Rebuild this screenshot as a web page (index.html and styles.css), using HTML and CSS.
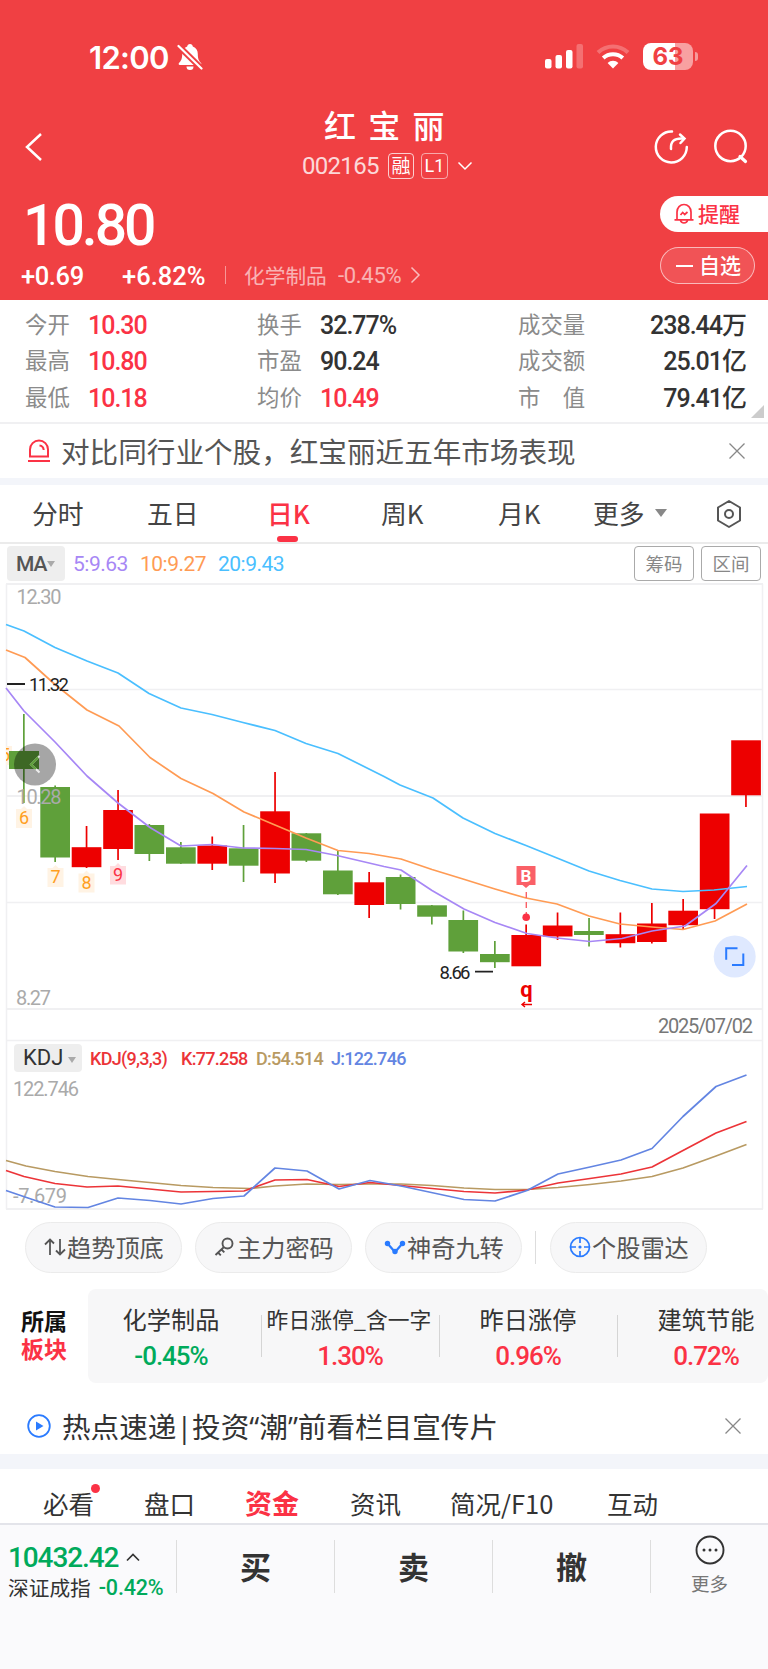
FILE: index.html
```
<!DOCTYPE html>
<html lang="zh-CN">
	<head>
		<meta charset="UTF-8">
		<title>红宝丽 002165</title>
		<link rel="stylesheet" href="styles.css">
	</head>
	<body>
		<div class="header">
			<div class="status">
				<span class="time">12:00</span>
				<svg class="mute" width="26" height="28" viewBox="0 0 26 28">
					<path d="M13 1c-1.700 0-2.600 1-2.800 2.400C6.700 4.600 5.200 7.500 5.200 11c0 5-1.200 7-3.200 9-.8.900-.3 2 .8 2h20.400c1.100 0 1.600-1.100.8-2-2-2-3.200-4-3.200-9 0-3.500-1.500-6.400-5-7.600C15.600 2 14.700 1 13 1z" fill="#fff"/>
					<path d="M9.500 23.500h7a3.500 3.500 0 0 1-7 0z" fill="#fff"/>
					<path d="M1 2.500l24 23.500" stroke="#f04043" stroke-width="6"/>
					<path d="M1.500 3l23 22.500" stroke="#fff" stroke-width="2.200" stroke-linecap="round"/>
				</svg>
				<svg class="signal" width="39" height="26" viewBox="0 0 39 26" fill="#fff">
					<rect x="0" y="15" width="6.500" height="9.500" rx="2"/>
					<rect x="10.500" y="11" width="6.500" height="13.500" rx="2"/>
					<rect x="21" y="6" width="6.500" height="18.500" rx="2"/>
					<rect x="31.500" y="0" width="6.500" height="24.500" rx="2" opacity=".25"/>
				</svg>
				<svg class="wifi" width="34" height="26" viewBox="0 0 34 26">
					<path d="M2 8.500a21.500 21.500 0 0 1 30 0" fill="none" stroke="#fff" stroke-width="4" opacity=".25"/>
					<path d="M7.200 14a14.500 14.500 0 0 1 19.600 0" fill="none" stroke="#fff" stroke-width="4"/>
					<path d="M17 24.500l-5.400-5.500a7.800 7.800 0 0 1 10.800 0z" fill="#fff"/>
				</svg>
				<div class="battery">63</div>
				<i class="battery-cap"></i>
			</div>
			<div class="titlebar">
				<svg class="back" width="18" height="30" viewBox="0 0 18 30"><path d="M16 2L2 15l14 13" fill="none" stroke="#fff" stroke-width="2.500"/></svg>
				<div class="title">
					<h1>红 宝 丽</h1>
					<div class="code">
						<span class="num">002165</span>
						<span class="tag">融</span>
						<span class="tag tag-l">L1</span>
						<svg width="16" height="10" viewBox="0 0 16 10"><path d="M1.500 1.500L8 8l6.500-6.500" fill="none" stroke="#fff" stroke-width="1.500"/></svg>
					</div>
				</div>
				<svg class="share" width="36" height="36" viewBox="0 0 36 36" fill="none" stroke="#fff" stroke-width="2.500" stroke-linecap="round">
					<path d="M18 2.500A15.500 15.500 0 1 0 32.800 18"/>
					<path d="M17 20c-.5-7 2.500-11 12-10.500"/>
					<path d="M26 5.500l4.500 4-4 4.500"/>
				</svg>
				<svg class="search" width="36" height="36" viewBox="0 0 36 36" fill="none" stroke="#fff" stroke-width="2.500">
					<circle cx="17.500" cy="18" r="15.200"/>
					<path d="M27 28.500l5.500 5" stroke-width="3.200" stroke-linecap="round"/>
				</svg>
			</div>
			<div class="quote">
				<div class="quote-main">
					<div class="price num">10.80</div>
					<div class="change">
						<span class="num chg">+0.69</span>
						<span class="num pct">+6.82%</span>
						<i class="sep"></i>
						<span class="sector-name">化学制品</span>
						<span class="num sector-pct">-0.45%</span>
						<svg width="11" height="18" viewBox="0 0 11 18"><path d="M1.500 1.500L9 9l-7.500 7.500" fill="none" stroke="#fff" stroke-opacity=".65" stroke-width="1.500"/></svg>
					</div>
				</div>
				<div class="quote-btns">
					<div class="btn-remind">
						<svg width="20" height="22" viewBox="0 0 20 22" fill="none" stroke="#fb3245" stroke-width="1.700">
							<path d="M3 16.500V9a7 7.500 0 0 1 14 0v7.500M.5 16.800h19"/>
							<path d="M6.500 17a3.500 3 0 0 0 7 0"/>
							<path d="M6.500 12l2.200-2.500 2 2L13.500 9"/>
						</svg>
						<span>提醒</span>
					</div>
					<div class="btn-self"><i></i><span>自选</span></div>
				</div>
			</div>
		</div>

		<div class="stats">
			<div class="col1">
				<p><label>今开</label><b class="num red">10.30</b></p>
				<p><label>最高</label><b class="num red">10.80</b></p>
				<p><label>最低</label><b class="num red">10.18</b></p>
			</div>
			<div class="col2">
				<p><label>换手</label><b class="num">32.77%</b></p>
				<p><label>市盈</label><b class="num">90.24</b></p>
				<p><label>均价</label><b class="num red">10.49</b></p>
			</div>
			<div class="col3">
				<p><label>成交量</label><b class="num">238.44万</b></p>
				<p><label>成交额</label><b class="num">25.01亿</b></p>
				<p><label>市　值</label><b class="num">79.41亿</b></p>
			</div>
			<i class="corner"></i>
		</div>

		<div class="notice">
			<svg width="22" height="24" viewBox="0 0 22 24" fill="none" stroke="#fb3245" stroke-width="2">
				<path d="M2 17.500V10.500a9 9 0 0 1 18 0v7z"/>
				<path d="M0 22h22M11.500 6.500c2.500.3 4 1.800 4.200 4.500"/>
			</svg>
			<span>对比同行业个股，红宝丽近五年市场表现</span>
			<svg class="close" width="16" height="16" viewBox="0 0 16 16"><path d="M.5.500l15 15M15.500.500l-15 15" stroke="#888" stroke-width="1.300"/></svg>
		</div>

		<div class="period">
			<span>分时</span>
			<span>五日</span>
			<span class="on">日K</span>
			<span>周K</span>
			<span>月K</span>
			<span class="more">更多<i class="tri"></i></span>
			<svg width="28" height="30" viewBox="0 0 28 30" fill="none" stroke="#555" stroke-width="2">
				<path d="M14 2l11 6.500v13L14 28 3 21.500v-13z" stroke-linejoin="round"/>
				<circle cx="14" cy="15" r="4"/>
			</svg>
		</div>

		<div class="ma">
			<span class="ma-btn">MA<i class="tri"></i></span>
			<span class="num ma5">5:9.63</span>
			<span class="num ma10">10:9.27</span>
			<span class="num ma20">20:9.43</span>
			<span class="box">筹码</span>
			<span class="box">区间</span>
		</div>

		<div class="chart">
			<svg width="768" height="627" viewBox="0 583 768 627">
				<clipPath id="plot"><rect x="6" y="583" width="757" height="627"/></clipPath>
				<!-- 网格 -->
				<g fill="none" stroke="#f0f0f2">
					<path d="M6.500 1209V584M762.500 584v625" stroke-width="1.500"/>
					<path d="M6 584h757M6 796h757M6 1009h757M6 1209h757" stroke-width="2"/>
					<path d="M6 689.500h757M6 902.500h757M6 1040.500h757" stroke-width="1.300"/>
				</g>
				<!-- K线 跌 -->
				<g fill="#5fa03a">
					<path d="M23 714h1.700v89H23zM54.300 785.500H56V862h-1.700zM148.500 824h1.700v37h-1.700zM180 842h1.700v22H180zM242.700 825h1.700v57h-1.700zM305.500 833h1.700v29h-1.700zM337 851h1.700v44H337zM399.700 874.500h1.700v35h-1.700zM431 905h1.700v19.500H431zM462.500 910.500h1.700V953h-1.700zM494 941h1.700v27H494zM588.200 918h1.700v28.500h-1.700z"/>
					<rect x="9" y="751" width="30" height="18"/>
					<rect x="40.300" y="787" width="29.700" height="70.500"/>
					<rect x="134.500" y="825" width="29.700" height="29"/>
					<rect x="166" y="847.300" width="29.700" height="16.400"/>
					<rect x="228.800" y="848.300" width="29.700" height="17.400"/>
					<rect x="291.500" y="833.300" width="29.700" height="27.400"/>
					<rect x="323" y="870.500" width="29.700" height="23.800"/>
					<rect x="385.800" y="877" width="29.700" height="27"/>
					<rect x="417.200" y="905.300" width="29.700" height="11.400"/>
					<rect x="448.400" y="920" width="29.700" height="31.500"/>
					<rect x="480" y="954" width="29.700" height="8.200"/>
					<rect x="574" y="931" width="29.700" height="4"/>
				</g>
				<!-- K线 涨 -->
				<g fill="#ed0000">
					<path d="M85.700 826h1.700v42h-1.700zM117.200 790h1.700v70h-1.700zM211.400 836.500h1.700V870h-1.700zM274.200 772h1.700v111h-1.700zM368.300 872h1.700v46h-1.700zM525.300 924.500h1.700V940h-1.700zM556.700 912.500h1.700V940h-1.700zM619.500 912.500h1.700v35h-1.700zM651 903h1.700v40.500H651zM682.300 899h1.700v30h-1.700zM713.700 900h1.700v19h-1.700zM745.100 790h1.700v17h-1.700z"/>
					<rect x="71.700" y="847.200" width="29.700" height="20"/>
					<rect x="103.200" y="810" width="29.700" height="39"/>
					<rect x="197.400" y="845.500" width="29.700" height="18.200"/>
					<rect x="260.200" y="811.300" width="29.700" height="62.200"/>
					<rect x="354.400" y="882.300" width="29.700" height="22.700"/>
					<rect x="511.400" y="935" width="29.700" height="31.300"/>
					<rect x="542.800" y="925.500" width="29.700" height="11"/>
					<rect x="605.600" y="934.200" width="29.700" height="9"/>
					<rect x="637" y="923.500" width="29.700" height="18.500"/>
					<rect x="668.300" y="910.700" width="29.700" height="14.500"/>
					<rect x="699.800" y="813.500" width="29.700" height="95.700"/>
					<rect x="731.200" y="740.300" width="29.700" height="55"/>
				</g>
				<!-- 均线 -->
				<g fill="none" stroke-width="1.700" stroke-linejoin="round">
					<polyline stroke="#4abfff" points="6,624.500 24,631 55,647.500 87,661 118,673 149,693.500 181,708 212,714.500 243,722.500 275,730.500 306,743.500 338,753.500 369,769 384,776.500 400,785 433,798 463,818 495,833.500 526,845.500 557,858 589,871 620,880.500 652,889 683,891.500 714,890 747,886.500"/>
					<polyline stroke="#ff9b54" points="6,650 25,657.500 55,684.500 87,710 119,726 150,757.500 181,778.500 213,793.500 244,812 275,825 306,838 338,850.500 369,853.500 384,856 401,859 432,869.500 463,879 495,889 526,898 557,904 589,916 620,924 652,927 683,929.500 715,921 747,904"/>
					<polyline stroke="#a787f5" points="6,688 24,711 55,742 87,776 118,803 150,827.500 181,846 212,844.500 243,848 275,848.500 306,849.500 337,855.500 384,866.500 401,870 432,890.500 464,909 495,922.500 527,933.500 557,938 590,941.500 622,938.500 652,931 685,926 716,903.500 747,865.500"/>
				</g>
				<!-- 坐标 -->
				<g class="axis">
					<text x="16.500" y="603.500" textLength="45">12.30</text>
					<text x="16.500" y="804" textLength="45">10.28</text>
					<text x="16" y="1004.500" textLength="35">8.27</text>
					<text x="13" y="1095.500" textLength="66">122.746</text>
					<text x="13" y="1203" textLength="54">-7.679</text>
					<text x="658" y="1032.500" textLength="95" class="date">2025/07/02</text>
				</g>
				<g class="mark">
					<path d="M7 684h18M475 971.700h18" stroke="#222" stroke-width="1.800"/>
					<text x="29" y="691" textLength="40">11.32</text>
					<text x="439.500" y="979" textLength="31">8.66</text>
				</g>
				<!-- 九转 -->
				<g class="nine">
					<path d="M16 809h5l3-3 3 3h5v19H16zM47.500 868h5l3-3 3 3h5v19h-16zM78.500 873.500h5l3-3 3 3h5v19h-16z" fill="#fff3e4"/>
					<path d="M110 866h5l3-3 3 3h5v18.500h-16z" fill="#ffdcdf"/>
					<text x="24" y="824">6</text>
					<text x="55.500" y="883">7</text>
					<text x="86.500" y="888.500">8</text>
					<text x="118" y="881" class="r9">9</text>
					<g clip-path="url(#plot)">
						<path d="M-4 746h16v19H-4z" fill="#fff3e4"/>
						<text x="5" y="761">5</text>
					</g>
				</g>
				<path d="M9 751h30v18H9z" fill="#5fa03a"/>
				<!-- 买点 -->
				<path d="M516.500 866h19v19h-6l-3.500 3-3.500-3h-6z" fill="#fa6067"/>
				<text x="526" y="881.500" class="buy">B</text>
				<path d="M526.300 892v22" stroke="#fa6067" stroke-width="1.400" stroke-dasharray="6 4"/>
				<circle cx="526.200" cy="917.300" r="3.800" fill="#fb3245"/>
				<text x="526.500" y="996.500" class="q">q</text>
				<path d="M522 1004.500h10M525 1002l-3 2.500 3 2.500" fill="none" stroke="#ed0000" stroke-width="1.400"/>
				<!-- 左翻 -->
				<circle cx="35" cy="764.500" r="21" fill="#000" fill-opacity=".35"/>
				<path d="M39.500 756l-8.500 8.500 8.500 8" fill="none" stroke="#fff" stroke-opacity=".8" stroke-width="2"/>
				<path d="M38 757.500l-7 7 5 4.500" fill="none" stroke="#5fa03a" stroke-width="2"/>
				<!-- 全屏 -->
				<circle cx="734.700" cy="956.500" r="21" fill="#dfe9ff"/>
				<path d="M737.500 948.200h-11.300v11.500M732 965h11.300v-11.500" fill="none" stroke="#2a7bff" stroke-width="2"/>
				<!-- KDJ -->
				<g fill="none" stroke-width="1.700" stroke-linejoin="round">
					<polyline stroke="#b89a62" points="6,1160.500 26,1166 55,1171.500 88,1176.500 118,1179.500 181,1185.500 213,1187.500 250,1188.500 275,1186 307,1184 339,1184.500 370,1184 401,1184 432,1185.500 464,1188 495,1189.500 527,1189.500 558,1187.500 590,1184.500 621,1181 652,1176.500 683,1168 716,1156 746.500,1144.500"/>
					<polyline stroke="#ec3438" points="6,1170.500 24,1176.500 55,1183.500 87,1187 118,1186 181,1192 244,1191 275,1180 307,1179.500 339,1186.500 370,1182.500 401,1185.500 432,1188.500 464,1191.500 495,1193 527,1190 558,1183 590,1178.500 621,1174 652,1167 683,1150.500 716,1133 746.500,1121.500"/>
					<polyline stroke="#6385e2" points="6,1190.500 28,1198 55,1207 88,1207.500 118,1198 150,1200.500 181,1204 213,1198.500 244,1196 275,1168 307,1171 339,1189 370,1180.500 401,1186 464,1199.500 495,1201 527,1190.500 558,1174 590,1167 621,1160 652,1148.500 683,1116.500 716,1086.500 746.500,1075"/>
				</g>
			</svg>
			<div class="kdj">
				<span class="kdj-btn">KDJ<i class="tri"></i></span>
				<span class="num kdj-a">KDJ(9,3,3)</span>
				<span class="num kdj-k">K:77.258</span>
				<span class="num kdj-d">D:54.514</span>
				<span class="num kdj-j">J:122.746</span>
			</div>
		</div>

		<div class="tools">
			<span class="pill">
				<svg width="22" height="20" viewBox="0 0 22 20" fill="none" stroke="#555" stroke-width="1.800"><path d="M6 18V2.500M1 7.500l5-5 4 4M16 2v15.500M12 13.500l4 4 5-5"/></svg>趋势顶底
			</span>
			<span class="pill">
				<svg width="22" height="20" viewBox="0 0 22 20" fill="none" stroke="#555" stroke-width="1.900"><circle cx="13.500" cy="6.500" r="5"/><path d="M10 10l-8.500 8M4 15.500l2.800 2.800M7.500 12.500l2.800 2.800"/></svg>主力密码
			</span>
			<span class="pill">
				<svg width="22" height="20" viewBox="0 0 22 20"><path d="M3.500 6.500L11 15l7.500-8.500" fill="none" stroke="#2a7bff" stroke-width="2.200"/><g fill="#2a7bff"><circle cx="3.500" cy="6.500" r="2.700"/><circle cx="11" cy="14.500" r="2.700"/><circle cx="18.500" cy="6.500" r="2.700"/></g></svg>神奇九转
			</span>
			<i class="sep"></i>
			<span class="pill">
				<svg width="22" height="22" viewBox="0 0 22 22" fill="none" stroke="#2a7bff" stroke-width="1.700"><circle cx="11" cy="11" r="9.500"/><path d="M11 1.500V7M11 15v5.500M1.500 11H7M15 11h5.500"/><circle cx="11" cy="11" r="1.600" fill="#2a7bff" stroke="none"/></svg>个股雷达
			</span>
		</div>

		<div class="plate">
			<div class="plate-title">所属<br><em>板块</em></div>
			<div class="plate-list">
				<div class="cell"><p>化学制品</p><b class="num green">-0.45%</b></div>
				<div class="cell"><p class="small">昨日涨停_含一字</p><b class="num red">1.30%</b></div>
				<div class="cell"><p>昨日涨停</p><b class="num red">0.96%</b></div>
				<div class="cell"><p>建筑节能</p><b class="num red">0.72%</b></div>
			</div>
		</div>

		<div class="notice news">
			<svg width="24" height="24" viewBox="0 0 24 24"><circle cx="12" cy="12" r="10.800" fill="none" stroke="#2a7bff" stroke-width="1.800"/><path d="M9 7.500v9l7.500-4.500z" fill="#2a7bff"/></svg>
			<span>热点速递<q>|</q>投资<q>“</q>潮<q>”</q>前看栏目宣传片</span>
			<svg class="close" width="16" height="16" viewBox="0 0 16 16"><path d="M.5.500l15 15M15.500.500l-15 15" stroke="#888" stroke-width="1.300"/></svg>
		</div>

		<div class="tabs">
			<span class="dot">必看</span>
			<span>盘口</span>
			<span class="on">资金</span>
			<span>资讯</span>
			<span>简况/F10</span>
			<span>互动</span>
		</div>

		<div class="bottom">
			<div class="index">
				<p><b class="num green">10432.42</b><svg width="14" height="9" viewBox="0 0 14 9"><path d="M1 7.500L7 1.500l6 6" fill="none" stroke="#333" stroke-width="1.700"/></svg></p>
				<p class="index-name">深证成指<b class="num green">-0.42%</b></p>
			</div>
			<div class="trade">买</div>
			<div class="trade">卖</div>
			<div class="trade">撤</div>
			<div class="menu">
				<svg width="30" height="30" viewBox="0 0 30 30"><circle cx="15" cy="15" r="13.500" fill="none" stroke="#333" stroke-width="1.900"/><g fill="#333"><circle cx="9" cy="15" r="1.500"/><circle cx="15" cy="15" r="1.500"/><circle cx="21" cy="15" r="1.500"/></g></svg>
				<span>更多</span>
			</div>
		</div>
	</body>
</html>
```
FILE: styles.css
```
*{padding:0;margin:0;box-sizing:border-box;}
i,em{font-style:normal;}
svg{display:block;flex:none;}
body{width:768px;height:1669px;overflow:hidden;background:#fff;color:#333;font-family:"Noto Sans CJK SC",sans-serif;white-space:nowrap;}
.num{font-family:Roboto,"Noto Sans CJK SC",sans-serif;letter-spacing:-0.04em;font-weight:500;}
.red{color:#fb3245;}
.green{color:#00aa5b;}
.tri{border:5px solid transparent;border-top:7px solid #aaa;border-bottom:0;}

/* 头部 */
.header{height:300px;background:#f04043;color:#fff;}
.status{display:flex;height:100px;padding:43px 0 0 89px;align-items:flex-start;}
.time{width:88px;font:600 31px/29px Inter,sans-serif;letter-spacing:-0.7px;}
.signal{margin:1px 12px 0 342px;}
.wifi{margin:1px 13px 0 0;}
.battery{width:50px;height:27px;border-radius:8px;background:linear-gradient(90deg,#fff 63%,#f8a0a1 63%);color:#f04043;font:700 24px/27px Inter,sans-serif;text-align:center;}
.battery-cap{width:3px;height:9px;margin:9px 0 0 2px;border-radius:0 3px 3px 0;background:#f69a9b;}
.titlebar{display:flex;height:90px;padding-left:25px;align-items:flex-start;}
.back{margin-top:32px;}
.title{width:611px;padding-left:259px;}
.title h1{font-weight:500;font-size:32px;line-height:36px;margin:6px 0 0 22px;word-spacing:5px;}
.code{display:flex;align-items:center;height:28px;margin-top:10px;font-size:24px;}
.code .num{width:86px;opacity:.8;font-weight:400;letter-spacing:-0.7px;}
.tag{width:26px;height:26px;margin-right:7px;border:1.500px solid rgba(255,255,255,.75);border-radius:4px;font-size:19px;line-height:22px;text-align:center;}
.tag-l{width:27px;margin-right:9px;font:18px/23px Roboto,sans-serif;border-color:rgba(255,255,255,.55);}
.share{margin-top:29px;}
.search{margin:28px 0 0 23px;}
.quote{display:flex;height:110px;justify-content:space-between;}
.quote-main{padding-left:21px;}
.price{padding-left:2px;height:69px;font-size:57px;line-height:72px;letter-spacing:-3px;}
.change{display:flex;align-items:center;height:32px;font-size:25.500px;line-height:32px;}
.change .num{margin-top:1px;}
.chg{width:101px;letter-spacing:-0.5px;}
.change .pct{width:103px;letter-spacing:0;}
.change .chg{letter-spacing:-0.4px;}
.change .sep{width:1px;height:18px;background:rgba(255,255,255,.45);}
.sector-name{width:94px;margin-left:18px;font-size:20.700px;opacity:.6;}
.change .sector-pct{width:72px;font-size:22px;opacity:.6;font-weight:400;letter-spacing:-0.3px;}
.quote-btns{width:108px;padding-top:6px;}
.btn-remind{display:flex;align-items:center;height:36px;padding-left:14px;border-radius:18px 0 0 18px;background:#fff;color:#fb3245;font-size:21px;line-height:34px;font-weight:500;gap:4px;}
.btn-self{display:flex;align-items:center;width:95px;height:37px;margin-top:15px;padding-left:15px;border:1px solid rgba(255,255,255,.6);border-radius:19px;background:rgba(255,255,255,.1);font-size:21px;line-height:34px;font-weight:500;}
.btn-remind span,.btn-self span{margin-top:-3px;}
.btn-self i{width:17px;height:2px;margin-right:6px;background:#fff;}

/* 行情 */
.stats{position:relative;display:flex;height:124px;padding:6px 0 0 25px;border-bottom:2px solid #f0f0f2;}
.stats p{display:flex;align-items:center;height:36.600px;}
.stats label{width:63px;color:#8b8b8b;font-size:22.400px;line-height:30px;margin-top:-3px;}
.stats b{font-size:25px;line-height:32px;margin-top:3px;}
.col1{width:232px;}
.col2{width:261px;}
.col3{width:228px;}
.col3 p{justify-content:space-between;}
.col3 label{width:80px;}
.corner{position:absolute;right:4px;bottom:4px;border-left:13px solid transparent;border-bottom:13px solid #ccc;}

.notice{display:flex;align-items:center;height:61px;padding:0 23px 0 28px;border-bottom:7px solid #f3f5fa;font-size:28.600px;color:#555;}
.notice span{margin-left:11px;line-height:40px;}
.close{margin-left:auto;}
.news{height:86px;padding:17px 27px 2px 27px;border-bottom-width:15px;color:#333;}
.news q{font-family:"Open Sans",sans-serif;quotes:none;}

/* 周期 */
.period{display:flex;align-items:center;height:59px;padding:0 24px 0 32px;border-bottom:2px solid #ebebeb;font-size:25.800px;line-height:38px;color:#444;}
.period span{position:relative;width:115px;margin-top:-1px;}
.period span:nth-child(2){width:120px;}
.period span:nth-child(3){width:114px;}
.period span:nth-child(4){width:117px;}
.period span:nth-child(5){width:95px;}
.period .more{display:flex;align-items:center;width:122px;}
.more .tri{margin-left:10px;border-width:8px 6.500px 0;border-top-color:#888;}
.period .on{color:#fb3245;font-weight:500;}
.period .on:after{content:"";position:absolute;left:10px;bottom:-10px;width:21px;height:6px;border-radius:3px;background:#fb3245;}

.ma{display:flex;height:39px;padding:2px 7px 0 7px;line-height:36px;font-size:21px;}
.ma .num{font-weight:400;letter-spacing:-0.5px;}
.ma-btn{display:flex;align-items:center;width:58px;height:35px;margin-right:8px;padding-left:9px;border-radius:4px;background:#eee;font:500 21px/36px Roboto,sans-serif;color:#555;letter-spacing:-1px;}
.ma-btn .tri{border-width:6px 4px 0;margin-left:1px;}
.ma5{width:67px;color:#a787f5;}
.ma10{width:78px;color:#ff9b54;}
.ma20{width:410px;color:#4abfff;}
.box{width:60px;height:35px;margin-left:7px;border:1.500px solid #aaa;border-radius:4px;font-size:18.500px;line-height:32px;text-align:center;color:#888;flex:none;}
.ma20 + .box{margin-left:6px;}

/* 图表 */
.chart{position:relative;height:627px;}
.chart text{font-family:Roboto,sans-serif;}
.axis text{font-size:20px;fill:#aaa;}
.axis .date{fill:#777;}
.mark text{font-size:18.500px;fill:#222;}
.nine text{font-size:18px;fill:#ff9f1f;text-anchor:middle;}
.nine .r9{fill:#fb3245;}
.chart .buy{font-size:17px;font-weight:700;fill:#fff;text-anchor:middle;}
.chart .q{font-size:22px;font-weight:700;fill:#ed0000;text-anchor:middle;}
.kdj{position:absolute;left:14px;top:460px;display:flex;align-items:center;height:29px;font-size:18px;}
.kdj .num{margin-top:2px;}
.kdj-btn{display:flex;align-items:center;width:68px;height:28px;margin-right:8px;padding-left:9px;border-radius:4px;background:#eee;font:22px/28px Roboto,sans-serif;}
.kdj-btn .tri{margin:4px 0 0 5px;border-width:6px 4px 0;}
.kdj-a{width:91px;color:#ec3438;}
.kdj-k{width:75px;color:#ec3438;}
.kdj-d{width:75px;color:#b89a62;}
.kdj-j{color:#6385e2;}

/* 工具 */
.tools{display:flex;align-items:center;height:79px;padding:0 0 5px 25px;gap:13px;}
.pill{display:flex;align-items:center;width:157px;height:51px;padding-left:18px;border:1px solid #ebebeb;border-radius:26px;background:#f7f7f8;font-size:24.200px;line-height:46px;color:#555;gap:1px;}
.tools .sep{width:1px;height:33px;background:#ddd;}
.tools .sep + .pill{margin-left:1px;}

.plate{display:flex;height:94px;}
.plate-title{width:88px;padding:18px 0 0 21px;font-size:23px;line-height:27.500px;font-weight:700;color:#111;}
.plate-title em{color:#fb3245;}
.plate-list{display:flex;flex:1;border-radius:8px;background:#f7f7f8;overflow:hidden;}
.cell{position:relative;flex:none;width:178px;padding-top:12px;text-align:center;}
.cell:first-child{width:173px;padding-right:7px;}
.cell + .cell:before{content:"";position:absolute;left:0;top:26px;width:1px;height:42px;background:#d5d5d5;}
.cell p{height:37px;font-size:24.200px;line-height:36px;}
.cell .small{font-size:21.800px;margin-left:-2px;}
.cell b{display:block;font-size:26px;line-height:36px;}

.tabs{display:flex;height:56px;padding:15px 0 0 43px;border-bottom:2px solid #e3e4ea;font-size:25.500px;line-height:38px;}
.tabs span{position:relative;width:101px;}
.tabs span:nth-child(3){width:105px;}
.tabs span:nth-child(4){width:100px;}
.tabs span:nth-child(5){width:157px;}
.tabs .on{font-size:27px;font-weight:700;color:#fb3245;}
.dot:after{content:"";position:absolute;left:48px;top:0;width:9px;height:9px;border-radius:50%;background:#fb3245;}

/* 底部 */
.bottom{display:flex;height:145px;padding-top:14px;background:#fafafc;}
.index{width:176px;padding-left:8px;}
.index p{display:flex;align-items:center;height:36px;font-size:28px;gap:8px;}
.index .index-name{height:24px;font-size:20.700px;}
.index .index-name b{font-size:21.500px;letter-spacing:-0.2px;}
.trade{width:158px;height:53px;margin-top:1px;border-left:1px solid #ddd;font-size:31px;font-weight:700;line-height:51px;text-align:center;}
.menu{display:flex;flex-direction:column;align-items:center;width:118px;height:53px;margin-top:1px;border-left:1px solid #ddd;font-size:18.500px;line-height:28px;color:#777;}
.menu svg{margin-top:-5px;}
.menu span{margin-top:4px;}
```
